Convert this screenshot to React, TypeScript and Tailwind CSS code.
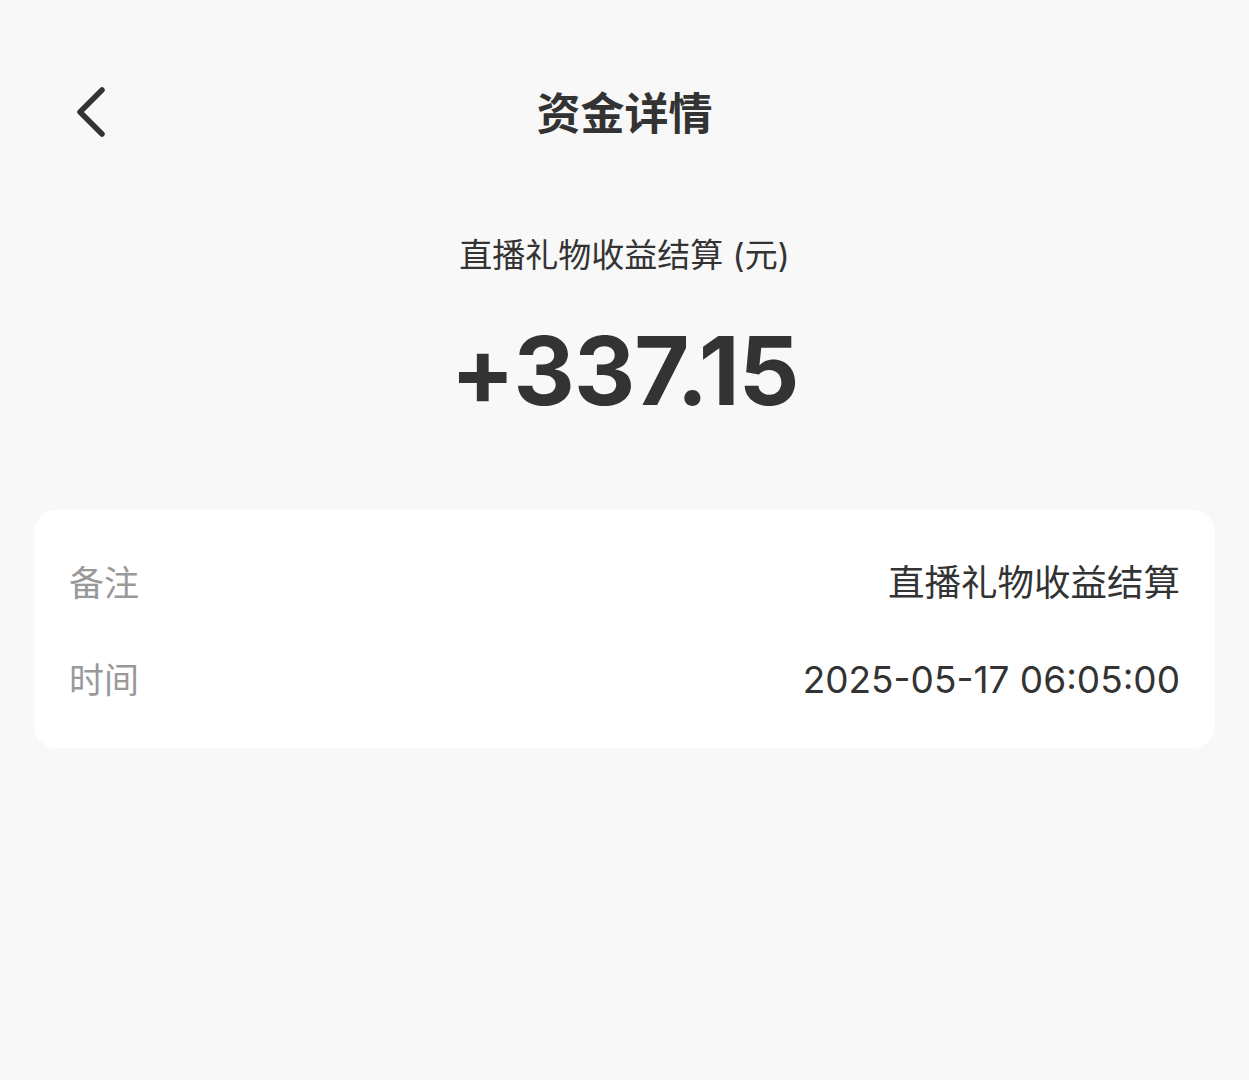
import React from "react";

export default function App() {
  const font = { fontFamily: '"Inter", "Noto Sans CJK SC", sans-serif' };
  return (
    <div className="w-[1249px] h-[1080px] bg-[#f8f8f8] text-[#333333]" style={font}>
      <div className="relative h-[233px]">
        <div className="absolute left-[72px] top-[86px] w-[36px] h-[52px]">
          <svg width="36" height="52" viewBox="0 0 36 52" fill="none">
            <path d="M30 4 L8 26 L30 48" stroke="#333" strokeWidth="5.5" strokeLinecap="round" strokeLinejoin="round" />
          </svg>
        </div>
        <div className="pt-[84px] text-center text-[44px] leading-[60px] font-bold">资金详情</div>
      </div>
      <div className="text-center text-[33px] leading-[44px] text-[#333]">直播礼物收益结算 (元)</div>
      <div className="mt-[44px] text-center text-[95px] leading-[100px] font-bold tracking-[-1px]">+337.15</div>
      <div className="mx-[34px] mt-[89px] bg-white rounded-[22px] px-[35px] pt-[49px] pb-[44px] flex flex-col gap-[49px]">
        <div className="flex justify-between items-center h-[48px]">
          <span className="text-[35px] text-[#999999]">备注</span>
          <span className="text-[36.5px] text-[#333]">直播礼物收益结算</span>
        </div>
        <div className="flex justify-between items-center h-[48px]">
          <span className="text-[35px] text-[#999999]">时间</span>
          <span className="text-[37px] text-[#333]">2025-05-17 06:05:00</span>
        </div>
      </div>
    </div>
  );
}
